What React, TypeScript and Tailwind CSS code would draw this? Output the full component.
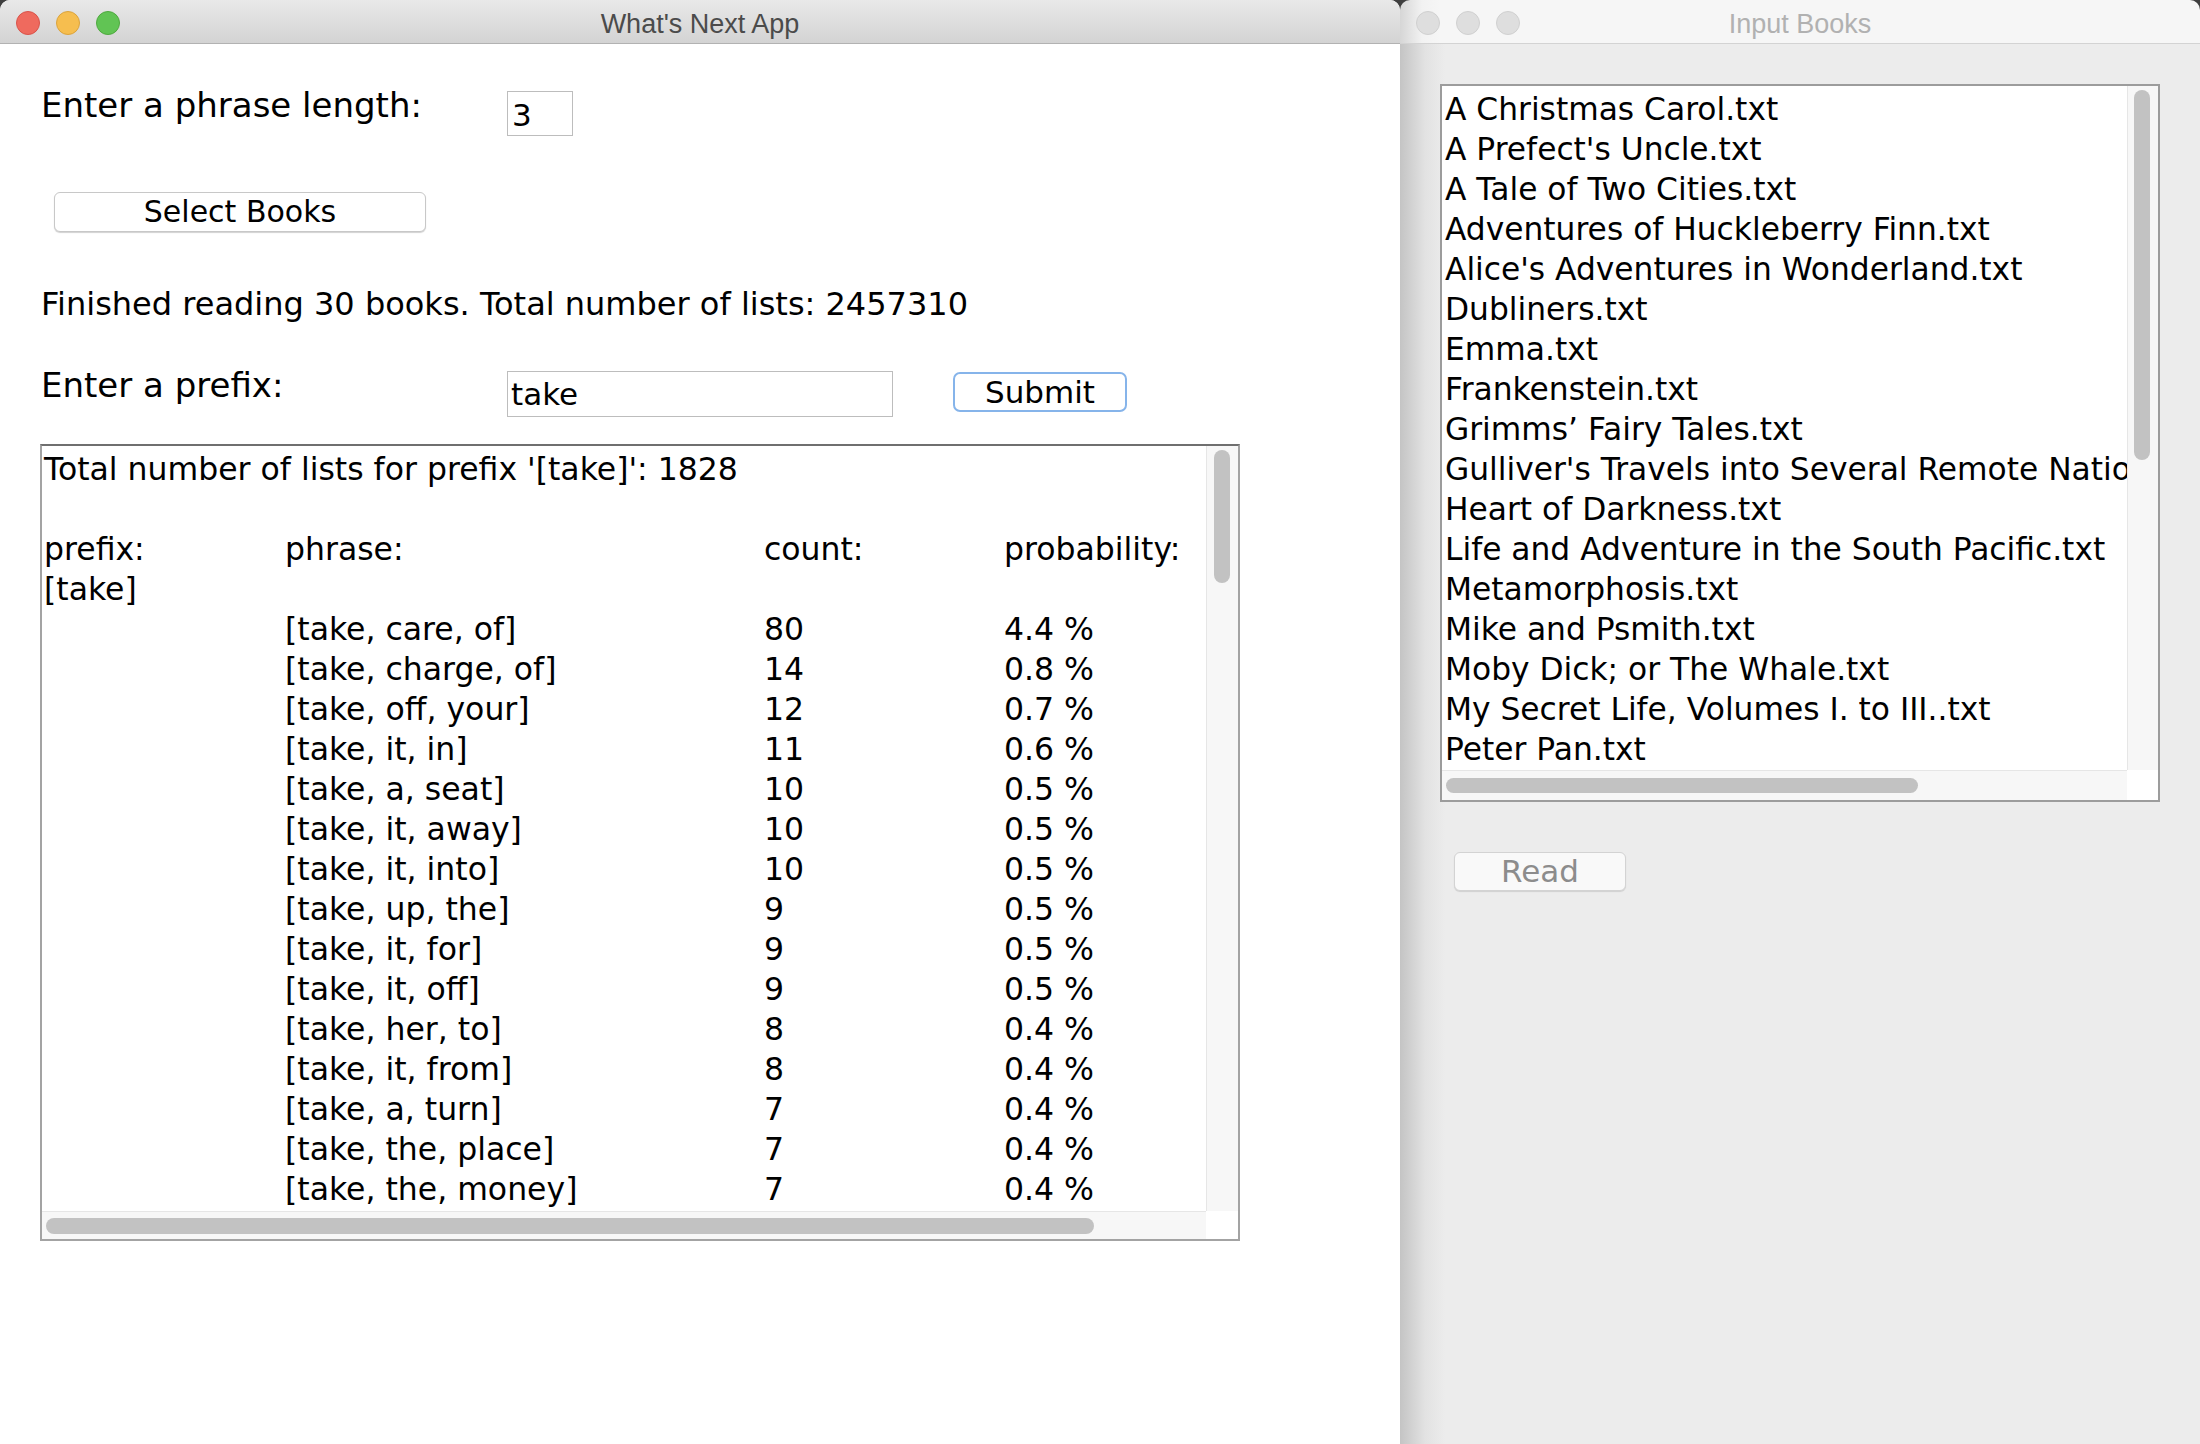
import React from 'react';

const rows: [string, string, string][] = [
  ['[take, care, of]', '80', '4.4 %'],
  ['[take, charge, of]', '14', '0.8 %'],
  ['[take, off, your]', '12', '0.7 %'],
  ['[take, it, in]', '11', '0.6 %'],
  ['[take, a, seat]', '10', '0.5 %'],
  ['[take, it, away]', '10', '0.5 %'],
  ['[take, it, into]', '10', '0.5 %'],
  ['[take, up, the]', '9', '0.5 %'],
  ['[take, it, for]', '9', '0.5 %'],
  ['[take, it, off]', '9', '0.5 %'],
  ['[take, her, to]', '8', '0.4 %'],
  ['[take, it, from]', '8', '0.4 %'],
  ['[take, a, turn]', '7', '0.4 %'],
  ['[take, the, place]', '7', '0.4 %'],
  ['[take, the, money]', '7', '0.4 %'],
];

const books = [
  'A Christmas Carol.txt',
  "A Prefect's Uncle.txt",
  'A Tale of Two Cities.txt',
  'Adventures of Huckleberry Finn.txt',
  "Alice's Adventures in Wonderland.txt",
  'Dubliners.txt',
  'Emma.txt',
  'Frankenstein.txt',
  'Grimms’ Fairy Tales.txt',
  "Gulliver's Travels into Several Remote Nations of the World.txt",
  'Heart of Darkness.txt',
  'Life and Adventure in the South Pacific.txt',
  'Metamorphosis.txt',
  'Mike and Psmith.txt',
  'Moby Dick; or The Whale.txt',
  'My Secret Life, Volumes I. to III..txt',
  'Peter Pan.txt',
];

const Lights = ({ active }: { active: boolean }) => (
  <div className="flex gap-[16px] pl-[16px]">
    {active ? (
      <>
        <span className="size-[24px] rounded-full bg-[#ef6a5e] border border-[#d9534a]" />
        <span className="size-[24px] rounded-full bg-[#f6be4f] border border-[#dba43d]" />
        <span className="size-[24px] rounded-full bg-[#61c454] border border-[#4fa93f]" />
      </>
    ) : (
      <>
        <span className="size-[24px] rounded-full bg-[#dedede] border border-[#d0d0d0]" />
        <span className="size-[24px] rounded-full bg-[#dedede] border border-[#d0d0d0]" />
        <span className="size-[24px] rounded-full bg-[#dedede] border border-[#d0d0d0]" />
      </>
    )}
  </div>
);

const ResultsPane = () => (
  <div className="mt-[27px] w-[1200px] h-[797px] border-2 border-[#a3a3a3] border-t-[#6f6f6f] bg-white flex flex-col">
    <div className="flex flex-1 min-h-0">
      <div className="flex-1 overflow-hidden pl-[2px] pt-[3px] text-[31.5px] leading-[40px] whitespace-nowrap">
        <div>Total number of lists for prefix '[take]': 1828</div>
        <div>&nbsp;</div>
        <div className="grid grid-cols-[241px_479px_240px_auto]">
          <span>prefix:</span>
          <span>phrase:</span>
          <span>count:</span>
          <span>probability:</span>
        </div>
        <div>[take]</div>
        {rows.map(([phrase, count, prob]) => (
          <div key={phrase} className="grid grid-cols-[241px_479px_240px_auto]">
            <span />
            <span>{phrase}</span>
            <span>{count}</span>
            <span>{prob}</span>
          </div>
        ))}
      </div>
      <div className="w-[32px] bg-[#f7f7f7] border-l border-[#e6e6e6] pt-[4px] pl-[7px]">
        <div className="w-[16px] h-[133px] rounded-full bg-[#c2c2c2]" />
      </div>
    </div>
    <div className="flex h-[28px]">
      <div className="flex-1 bg-[#f7f7f7] border-t border-[#e6e6e6] pt-[6px] pl-[4px]">
        <div className="w-[1048px] h-[16px] rounded-full bg-[#c2c2c2]" />
      </div>
      <div className="w-[32px] bg-white" />
    </div>
  </div>
);

const MainWindow = () => (
  <div className="w-[1400px] h-full bg-white rounded-t-[10px] flex flex-col">
    <div className="h-[44px] shrink-0 pt-[2px] rounded-t-[10px] border-b border-[#b2b2b2] bg-linear-to-b from-[#e9e9e9] to-[#d3d3d3] grid grid-cols-[1fr_auto_1fr] items-center">
      <Lights active />
      <div className="mt-[3px] font-['Liberation_Sans'] text-[27px] leading-none text-[#4b4b4b]">What's Next App</div>
      <div />
    </div>

    <div className="flex flex-col px-[40px] font-['DejaVu_Sans',sans-serif] text-black">
      <div className="flex items-start pt-[41px]">
        <div className="w-[467px] pl-[1px] text-[34px] leading-[40px]">Enter a phrase length:</div>
        <div className="mt-[6px] w-[66px] h-[45px] border border-[#bdbdbd] pl-[4px] pt-[3px] text-[31px] leading-[40px]">
          3
        </div>
      </div>

      <button className="mt-[56px] ml-[14px] w-[372px] h-[40px] rounded-[6px] border border-[#c8c8c8] bg-white shadow-[0_1px_1px_rgba(0,0,0,0.18)] flex items-center justify-center text-[30px] leading-none">
        Select Books
      </button>

      <div className="mt-[52px] pl-[1px] text-[32px] leading-[40px]">
        Finished reading 30 books. Total number of lists: 2457310
      </div>

      <div className="mt-[41px] flex items-start">
        <div className="w-[467px] pl-[1px] text-[34px] leading-[40px]">Enter a prefix:</div>
        <div className="mt-[6px] w-[386px] h-[46px] border border-[#bdbdbd] pl-[3px] pt-[2px] text-[31px] leading-[40px]">
          take
        </div>
        <button className="ml-[60px] mt-[7px] w-[174px] h-[40px] rounded-[7px] border-2 border-[#86b4ea] bg-white flex items-center justify-center text-[31px] leading-none">
          Submit
        </button>
      </div>

      <ResultsPane />
    </div>
  </div>
);

const BooksWindow = () => (
  <div className="flex-1 h-full flex flex-col rounded-t-[10px] overflow-hidden">
    <div className="h-[44px] shrink-0 pt-[2px] border-b border-[#d3d3d3] bg-[linear-gradient(to_right,#d6d6d6,#f2f2f2_22px,#f6f6f6_40px)] grid grid-cols-[1fr_auto_1fr] items-center">
      <Lights active={false} />
      <div className="mt-[3px] font-['Liberation_Sans'] text-[27px] leading-none text-[#b1b1b1]">Input Books</div>
      <div />
    </div>
    <div className="flex-1 flex flex-col items-start pl-[40px] pt-[40px] bg-[linear-gradient(to_right,#c4c4c4,#e2e2e2_25px,#ececec_45px)] font-['DejaVu_Sans',sans-serif]">
      <div className="w-[720px] h-[718px] border-2 border-[#9c9c9c] bg-white flex flex-col">
        <div className="flex flex-1 min-h-0">
          <div className="flex-1 overflow-hidden pl-[3px] pt-[3px] text-[31.3px] leading-[40px] whitespace-nowrap text-black">
            {books.map((b) => (
              <div key={b}>{b}</div>
            ))}
          </div>
          <div className="w-[31px] bg-[#f7f7f7] border-l border-[#e6e6e6] pt-[4px] pl-[6px]">
            <div className="w-[16px] h-[370px] rounded-full bg-[#c2c2c2]" />
          </div>
        </div>
        <div className="flex h-[30px]">
          <div className="flex-1 bg-[#f7f7f7] border-t border-[#e6e6e6] pt-[7px] pl-[4px]">
            <div className="w-[472px] h-[15px] rounded-full bg-[#c2c2c2]" />
          </div>
          <div className="w-[31px] bg-white" />
        </div>
      </div>

      <button className="mt-[50px] ml-[14px] w-[172px] h-[39px] rounded-[6px] border border-[#d3d3d3] bg-[#f9f9f9] shadow-[0_1px_1px_rgba(0,0,0,0.12)] flex items-center justify-center text-[31px] leading-none text-[#8c8c8c]">
        Read
      </button>
    </div>
  </div>
);

export default function App() {
  return (
    <div className="flex w-[2200px] h-[1444px] overflow-hidden bg-[#3f3f3f]">
      <MainWindow />
      <BooksWindow />
    </div>
  );
}
